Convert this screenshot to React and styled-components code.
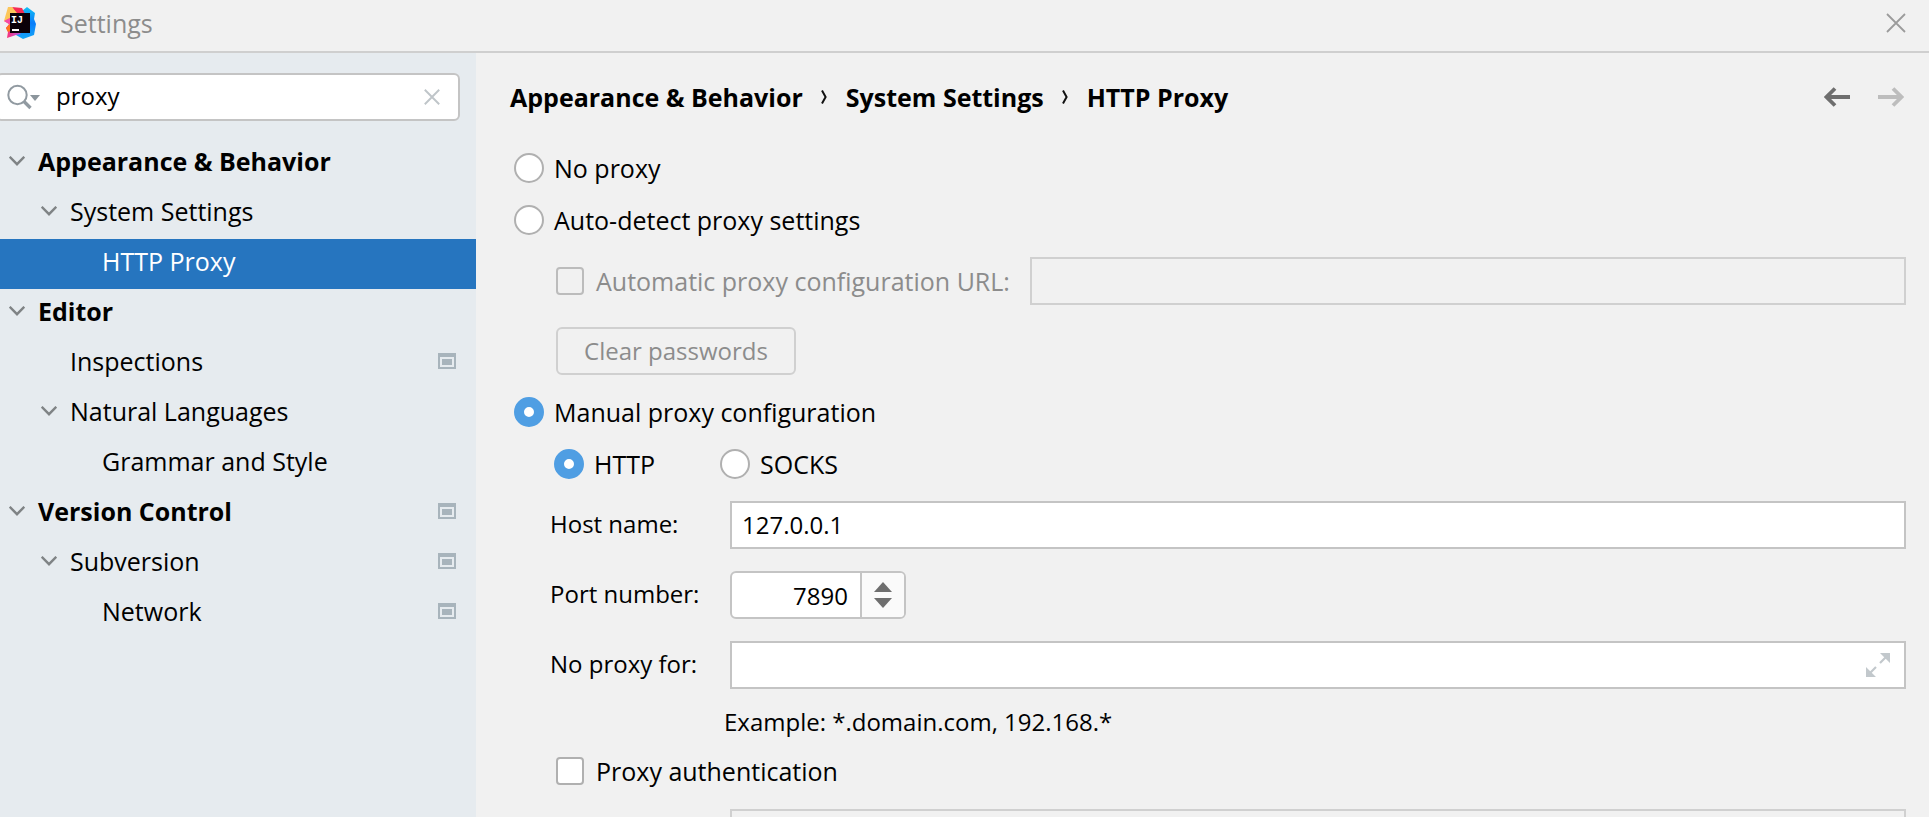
import React, { useState } from "react";
import styled, { createGlobalStyle, css } from "styled-components";

const GlobalStyle = createGlobalStyle`
  *, *::before, *::after { box-sizing: border-box; }
  body {
    margin: 0;
    background: #f1f1f1;
    color: #000;
    font-family: "Segoe UI", "Open Sans", "Noto Sans", sans-serif;
    font-size: 25px;
    line-height: 32px;
  }
  button, input { font: inherit; font-size: 24px; color: inherit; margin: 0; }
`;

const Window = styled.div`
  display: flex;
  flex-direction: column;
  height: 100vh;
  overflow: hidden;
`;

const TitleBar = styled.header`
  display: flex;
  align-items: center;
  flex: none;
  height: 53px;
  padding: 0 23px 5px 4px;
  border-bottom: 2px solid #cfcfcf;
  color: #8c8c8c;
`;

const Title = styled.h1`
  flex: 1;
  margin: 0 0 0 23px;
  font-size: inherit;
  font-weight: 400;
`;

const IconButton = styled.button`
  display: flex;
  flex: none;
  padding: 0;
  border: 0;
  background: none;
  cursor: pointer;
  &:disabled { cursor: default; }
`;

const Body = styled.div`
  display: flex;
  flex: 1;
  min-height: 0;
`;

const Sidebar = styled.aside`
  flex: none;
  width: 476px;
  padding-top: 20px;
  background: #e6ebef;
`;

const SearchBox = styled.div`
  display: flex;
  align-items: center;
  height: 48px;
  margin: 0 16px 18px -4px;
  padding: 0 18px 0 9px;
  border: 2px solid #c4c4c4;
  border-radius: 6px;
  background: #fff;
`;

const SearchInput = styled.input`
  flex: 1;
  min-width: 0;
  padding: 0 0 2px;
  margin-left: 15px;
  border: 0;
  outline: 0;
  background: none;
`;

const Tree = styled.ul`
  margin: 0;
  padding: 0;
  list-style: none;
`;

const TreeRow = styled.a`
  display: flex;
  align-items: center;
  height: 50px;
  padding: 0 20px 6px ${(p) => 9 + p.$level * 32}px;
  color: ${(p) => (p.$selected ? "#fff" : "#000")};
  background: ${(p) => (p.$selected ? "#2675bf" : "transparent")};
  font-weight: ${(p) => (p.$level === 0 ? 700 : 400)};
  text-decoration: none;
`;

const TreeLabel = styled.span`
  flex: 1;
  margin-left: 13px;
`;

const Main = styled.main`
  flex: 1;
  min-width: 0;
  padding: 28px 23px 0 38px;
`;

const TopRow = styled.div`
  display: flex;
  align-items: center;
  justify-content: space-between;
  height: 34px;
  margin-bottom: 37px;
`;

const Breadcrumbs = styled.nav`
  display: flex;
  align-items: center;
  font-weight: 700;
  margin: 0 0 2px -4px;
  a { color: inherit; text-decoration: none; }
  svg { margin: 0 19px 0 18px; }
`;

const History = styled.div`
  display: flex;
  gap: 28px;
  margin: 0 2px 2px 0;
`;

const Option = styled.label`
  display: flex;
  align-items: center;
  gap: ${(p) => (p.$box ? 12 : 10)}px;
  color: ${(p) => (p.$muted ? "#8c8c8c" : "inherit")};
  white-space: nowrap;
`;

const Radio = styled.input.attrs({ type: "radio" })`
  appearance: none;
  flex: none;
  width: 30px;
  height: 30px;
  border: 2px solid #b0b0b0;
  border-radius: 50%;
  background: #fff;
  &:checked {
    border: 10px solid #4f9ee3;
  }
`;

const Checkbox = styled.input.attrs({ type: "checkbox" })`
  appearance: none;
  flex: none;
  width: 28px;
  height: 28px;
  border: 2px solid #b0b0b0;
  border-radius: 4px;
  background: #fff;
  &:checked { background: #4f9ee3; }
  &:disabled { border-color: #bcbcbc; background: none; }
`;

const OptionList = styled.div`
  display: flex;
  flex-direction: column;
  align-items: flex-start;
  gap: 20px;
`;

const Indented = styled.div`
  padding-left: 42px;
`;

const UrlRow = styled.div`
  display: flex;
  align-items: center;
  gap: 20px;
  margin: 21px 0 22px;
`;

const fieldFrame = css`
  height: 48px;
  border: 2px solid ${(p) => (p.disabled ? "#d0d0d0" : "#c4c4c4")};
  background: ${(p) => (p.disabled ? "transparent" : "#fff")};
`;

const TextField = styled.input.attrs({ type: "text" })`
  ${fieldFrame}
  flex: 1;
  min-width: 0;
  width: 100%;
  padding: 0 10px 2px;
  border-radius: 0;
  outline: 0;
`;

const ClearButton = styled.button`
  display: block;
  width: 240px;
  height: 48px;
  margin-bottom: 21px;
  padding: 0;
  border: 2px solid #d0d0d0;
  border-radius: 6px;
  background: none;
  color: #8c8c8c;
`;

const Protocols = styled.div`
  display: flex;
  margin: 20px 0 21px 40px;
`;

const ProtocolOption = styled(Option)`
  width: 166px;
`;

const Fields = styled.div`
  display: grid;
  grid-template-columns: 180px minmax(0, 1fr);
  row-gap: 22px;
  align-items: center;
  padding-left: 36px;
`;

const FieldLabel = styled.label`
  padding-bottom: 2px;
  font-size: 24px;
`;

const Spinner = styled.div`
  ${fieldFrame}
  display: flex;
  width: 176px;
  border-radius: 6px;
  overflow: hidden;
`;

const SpinnerInput = styled.input.attrs({ type: "text", inputMode: "numeric" })`
  flex: 1;
  min-width: 0;
  padding: 2px 12px 0;
  border: 0;
  outline: 0;
  background: none;
  text-align: right;
`;

const Steppers = styled.div`
  display: flex;
  flex-direction: column;
  align-items: center;
  justify-content: center;
  gap: 6px;
  width: 44px;
  border-left: 2px solid #c4c4c4;
  background: #fafafa;
`;

const ExpandField = styled.div`
  ${fieldFrame}
  display: flex;
  align-items: center;
  padding-right: 14px;
`;

const BareInput = styled.input.attrs({ type: "text" })`
  flex: 1;
  min-width: 0;
  padding: 0 11px;
  border: 0;
  outline: 0;
  background: none;
`;

const Hint = styled.p`
  margin: 17px 0 17px 210px;
  font-size: 24px;
`;

const AuthFields = styled.div`
  display: flex;
  margin: 22px 0 0 216px;
`;

const Logo = () => (
  <svg width="33" height="34" viewBox="0 0 33 34" aria-hidden="true">
    <defs>
      <linearGradient id="warm" x1="0" y1="0" x2="1" y2="1">
        <stop offset="0" stopColor="#fcd04a" />
        <stop offset="0.5" stopColor="#ff4b5c" />
        <stop offset="1" stopColor="#fe2b7a" />
      </linearGradient>
      <linearGradient id="cool" x1="0" y1="0" x2="0" y2="1">
        <stop offset="0" stopColor="#12c0f5" />
        <stop offset="0.5" stopColor="#087cfa" />
        <stop offset="1" stopColor="#16a7f8" />
      </linearGradient>
      <linearGradient id="pink" x1="0" y1="0" x2="1" y2="0">
        <stop offset="0" stopColor="#ff2f6d" />
        <stop offset="1" stopColor="#b657e8" />
      </linearGradient>
    </defs>
    <path d="M18 5 L23 1 L31 7 L30 13 L32 18 L30 29 L19 33 L12 29 Z" fill="url(#cool)" />
    <path d="M4 1 L11 3 L16 2 L21 8 L12 13 L7 24 L2 22 L5 18 L0 15 L4 11 Z" fill="url(#warm)" />
    <path d="M8 1 L18 2 L21 8 L13 8 Z" fill="#f72b55" />
    <path d="M4 1 L8 1 L13 7 L6 12 L0 15 Z" fill="#fcc65a" />
    <path d="M0 15 L6 12 L6 20 L5 18 Z" fill="#f54aa7" />
    <path d="M2 22 L7 19 L17 28 L12 29 L3 32 L4 26 Z" fill="url(#pink)" />
    <path d="M2 22 L6 18 L6 25 L4 26 Z" fill="#ff7a1c" />
    <rect x="6" y="7" width="20" height="20" fill="#0b0008" />
    <text x="7" y="17" fill="#fff" fontFamily="Liberation Mono, monospace" fontWeight="700" fontSize="10">
      IJ
    </text>
    <rect x="8" y="23" width="7" height="2" fill="#fff" />
  </svg>
);

const Cross = ({ size, color, width }) => (
  <svg width={size} height={size} viewBox="0 0 20 20" aria-hidden="true">
    <path d="M1 1 L19 19 M19 1 L1 19" stroke={color} strokeWidth={width} fill="none" />
  </svg>
);

const SearchIcon = () => (
  <svg width="34" height="26" viewBox="0 0 34 26" aria-hidden="true">
    <circle cx="10.5" cy="11" r="9.2" fill="none" stroke="#919aa1" strokeWidth="2" />
    <path d="M17 17.5 L23.5 24" stroke="#919aa1" strokeWidth="3.4" />
    <path d="M23 11 H33 L28 17 Z" fill="#8b959c" />
  </svg>
);

const Chevron = ({ hidden }) => (
  <svg width="16" height="10" viewBox="0 0 16 10" aria-hidden="true">
    {!hidden && <path d="M0.7 0.8 L8 8.2 L15.3 0.8" stroke="#7f8385" strokeWidth="2.4" fill="none" />}
  </svg>
);

const ProjectIcon = () => (
  <svg width="18" height="16" viewBox="0 0 18 16" aria-hidden="true">
    <path d="M0 0 H18 V16 H0 Z M2 4 V14 H16 V4 Z" fill="#a8b4bc" fillRule="evenodd" />
    <rect x="4" y="6" width="10" height="6" fill="#a8b4bc" />
  </svg>
);

const CrumbArrow = () => (
  <svg width="6" height="16" viewBox="0 0 6 16" aria-hidden="true">
    <path d="M1 1.5 L4.6 8 L1 14.5" stroke="#111" strokeWidth="2" fill="none" />
  </svg>
);

const Arrow = ({ forward }) => (
  <svg width="26" height="20" viewBox="0 0 26 20" aria-hidden="true">
    <path
      d={forward ? "M0 10 H23 M15 1.5 L23.5 10 L15 18.5" : "M26 10 H3 M11 1.5 L2.5 10 L11 18.5"}
      stroke={forward ? "#bdbdbd" : "#6e6e6e"}
      strokeWidth="3.8"
      fill="none"
    />
  </svg>
);

const Triangle = ({ down }) => (
  <svg width="18" height="10" viewBox="0 0 18 10" aria-hidden="true">
    <path d={down ? "M0 0 H18 L9 10 Z" : "M0 10 H18 L9 0 Z"} fill="#6e6e6e" />
  </svg>
);

const ExpandIcon = () => (
  <svg width="24" height="24" viewBox="0 0 24 24" aria-hidden="true">
    <path d="M14 0 H24 V10 Z M0 14 V24 H10 Z" fill="#c2c8cc" />
    <path d="M14 10 L20 4 M10 14 L4 20" stroke="#c2c8cc" strokeWidth="2.2" />
  </svg>
);

const treeItems = [
  { label: "Appearance & Behavior", level: 0, open: true },
  { label: "System Settings", level: 1, open: true },
  { label: "HTTP Proxy", level: 2, selected: true },
  { label: "Editor", level: 0, open: true },
  { label: "Inspections", level: 1, project: true },
  { label: "Natural Languages", level: 1, open: true },
  { label: "Grammar and Style", level: 2 },
  { label: "Version Control", level: 0, open: true, project: true },
  { label: "Subversion", level: 1, open: true, project: true },
  { label: "Network", level: 2, project: true },
];

export default function App() {
  const [query, setQuery] = useState("proxy");
  const [mode, setMode] = useState("manual");
  const [protocol, setProtocol] = useState("http");
  const [port, setPort] = useState("7890");
  const step = (n) => setPort(String((parseInt(port, 10) || 0) + n));

  return (
    <Window>
      <GlobalStyle />
      <TitleBar>
        <Logo />
        <Title>Settings</Title>
        <IconButton aria-label="Close">
          <Cross size={20} color="#9b9b9b" width={1.8} />
        </IconButton>
      </TitleBar>
      <Body>
        <Sidebar>
          <SearchBox>
            <SearchIcon />
            <SearchInput aria-label="Search settings" value={query} onChange={(e) => setQuery(e.target.value)} />
            <IconButton aria-label="Clear search" onClick={() => setQuery("")}>
              <Cross size={16} color="#bfc5c9" width={2.4} />
            </IconButton>
          </SearchBox>
          <Tree>
            {treeItems.map((item) => (
              <li key={item.label}>
                <TreeRow href="#" $level={item.level} $selected={item.selected}>
                  <Chevron hidden={!item.open} />
                  <TreeLabel>{item.label}</TreeLabel>
                  {item.project && <ProjectIcon />}
                </TreeRow>
              </li>
            ))}
          </Tree>
        </Sidebar>
        <Main>
          <TopRow>
            <Breadcrumbs aria-label="Breadcrumb">
              <a href="#">Appearance &amp; Behavior</a>
              <CrumbArrow />
              <a href="#">System Settings</a>
              <CrumbArrow />
              <a href="#">HTTP Proxy</a>
            </Breadcrumbs>
            <History>
              <IconButton aria-label="Back"><Arrow /></IconButton>
              <IconButton aria-label="Forward" disabled><Arrow forward /></IconButton>
            </History>
          </TopRow>

          <OptionList>
            <Option>
              <Radio name="mode" checked={mode === "none"} onChange={() => setMode("none")} />
              No proxy
            </Option>
            <Option>
              <Radio name="mode" checked={mode === "auto"} onChange={() => setMode("auto")} />
              Auto-detect proxy settings
            </Option>
          </OptionList>

          <Indented>
            <UrlRow>
              <Option $box $muted>
                <Checkbox disabled />
                Automatic proxy configuration URL:
              </Option>
              <TextField aria-label="Automatic proxy configuration URL" disabled />
            </UrlRow>
            <ClearButton disabled>Clear passwords</ClearButton>
          </Indented>

          <Option>
            <Radio name="mode" checked={mode === "manual"} onChange={() => setMode("manual")} />
            Manual proxy configuration
          </Option>
          <Protocols>
            <ProtocolOption>
              <Radio name="protocol" checked={protocol === "http"} onChange={() => setProtocol("http")} />
              HTTP
            </ProtocolOption>
            <ProtocolOption>
              <Radio name="protocol" checked={protocol === "socks"} onChange={() => setProtocol("socks")} />
              SOCKS
            </ProtocolOption>
          </Protocols>

          <Fields>
            <FieldLabel htmlFor="host">Host name:</FieldLabel>
            <TextField id="host" defaultValue="127.0.0.1" />
            <FieldLabel htmlFor="port">Port number:</FieldLabel>
            <Spinner>
              <SpinnerInput id="port" value={port} onChange={(e) => setPort(e.target.value)} />
              <Steppers>
                <IconButton aria-label="Increase port" onClick={() => step(1)}><Triangle /></IconButton>
                <IconButton aria-label="Decrease port" onClick={() => step(-1)}><Triangle down /></IconButton>
              </Steppers>
            </Spinner>
            <FieldLabel htmlFor="exceptions">No proxy for:</FieldLabel>
            <ExpandField>
              <BareInput id="exceptions" />
              <IconButton aria-label="Expand"><ExpandIcon /></IconButton>
            </ExpandField>
          </Fields>

          <Hint>Example: *.domain.com, 192.168.*</Hint>
          <Indented>
            <Option $box>
              <Checkbox />
              Proxy authentication
            </Option>
          </Indented>
          <AuthFields>
            <TextField aria-label="Login" disabled />
          </AuthFields>
        </Main>
      </Body>
    </Window>
  );
}
